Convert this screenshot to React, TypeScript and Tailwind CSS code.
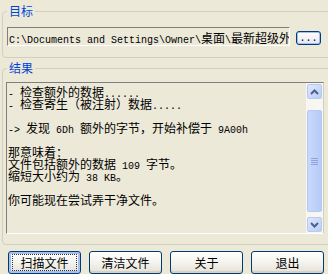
import React from "react";

function Mixed({ text }: { text: string }) {
  const parts = text.match(/[\x00-\x7f]+|[^\x00-\x7f]+/g) || [];
  return (
    <>
      {parts.map((p, i) =>
        /^[\x00-\x7f]/.test(p) ? (
          <span key={i} className="font-['Liberation_Mono',monospace] text-[10px] leading-[12px]">
            {p}
          </span>
        ) : (
          <span key={i} className="font-['Noto_Sans_CJK_SC',sans-serif] text-[12px] leading-[12px]">
            {p}
          </span>
        )
      )}
    </>
  );
}

const lines = [
  "- 检查额外的数据......",
  "- 检查寄生（被注射）数据.....",
  "",
  "-> 发现 6Dh 额外的字节，开始补偿于 9A00h",
  "",
  "那意味着：",
  "文件包括额外的数据 109 字节。",
  "缩短大小约为 38 KB。",
  "",
  "你可能现在尝试弄干净文件。",
];

function XpButton({ label, focused }: { label: string; focused?: boolean }) {
  return (
    <div
      className={
        "w-[73px] h-[23px] shrink-0 rounded-[3px] border border-[#003c74] bg-gradient-to-b from-[#ffffff] via-[#f4f3ee] to-[#e3e1d6] flex items-center justify-center " +
        (focused ? "shadow-[inset_0_0_0_2px_#a7bff0]" : "shadow-[inset_0_-2px_0_#d6d0c5]")
      }
    >
      <div
        className={
          "h-[17px] w-[65px] flex items-center justify-center font-['Noto_Sans_CJK_SC',sans-serif] text-[12px] text-black leading-[17px] " +
          (focused ? "border border-dotted border-[#333]" : "")
        }
      >
        {label}
      </div>
    </div>
  );
}

function Arrow({ up }: { up: boolean }) {
  return (
    <div className="w-[17px] h-[17px] flex items-center justify-center">
      <div className="w-[15px] h-[15px] rounded-[2px] border border-[#b6c9f3] bg-gradient-to-br from-[#dfe8fd] to-[#b9cdf8] flex items-center justify-center">
        <svg width="9" height="6" viewBox="0 0 9 6">
          {up ? (
            <path d="M1 5 L4.5 1.5 L8 5" stroke="#4d6185" strokeWidth="2" fill="none" />
          ) : (
            <path d="M1 1 L4.5 4.5 L8 1" stroke="#4d6185" strokeWidth="2" fill="none" />
          )}
        </svg>
      </div>
    </div>
  );
}

export default function App() {
  return (
    <div className="w-[328px] h-[274px] bg-[#ece9d8] overflow-hidden pt-[11px] pl-[2px]">
      {/* Group 1 */}
      <div className="relative w-[340px] h-[47px] border border-[#d0d0bf] rounded-[4px] pt-[15px] pl-[4px]">
        <div className="absolute left-[4px] top-[-9px] px-[2px] bg-[#ece9d8] text-[#0046d5] font-['Noto_Sans_CJK_SC',sans-serif] text-[12px] leading-[16px]">
          目标
        </div>
        <div className="flex items-center">
          <div className="w-[283px] h-[19px] border border-t-[#7f7f7f] border-l-[#7f7f7f] border-b-[#ffffff] border-r-[#ffffff] bg-[#ece9d8] overflow-hidden whitespace-pre pl-[1px] flex items-center">
            <div className="h-[12px] leading-[12px] whitespace-pre text-black">
              <Mixed text={"C:\\Documents and Settings\\Owner\\桌面\\最新超级外挂"} />
            </div>
          </div>
          <div className="ml-[6px] mt-[2px] w-[25px] h-[14px] rounded-[3px] border border-[#003c74] bg-gradient-to-b from-[#ffffff] to-[#e6e6f0] shadow-[inset_0_0_0_1px_#a7bff0] flex items-end justify-center">
            <span className="font-['Liberation_Mono',monospace] text-[10px] leading-[10px] text-black">...</span>
          </div>
        </div>
      </div>

      {/* Group 2 */}
      <div className="relative mt-[10px] w-[340px] h-[177px] border border-[#d0d0bf] rounded-[4px] pt-[13px] pl-[3px]">
        <div className="absolute left-[4px] top-[-9px] px-[2px] bg-[#ece9d8] text-[#0046d5] font-['Noto_Sans_CJK_SC',sans-serif] text-[12px] leading-[16px]">
          结果
        </div>
        <div className="w-[318px] h-[152px] border border-t-[#7f7f7f] border-l-[#7f7f7f] border-b-[#ffffff] border-r-[#d0d0bf] bg-[#ece9d8] flex">
          <div className="flex-1 pt-[2px] pl-[1px] overflow-hidden text-black">
            {lines.map((l, i) => (
              <div key={i} className="h-[12px] leading-[12px] whitespace-pre">
                <Mixed text={l} />
              </div>
            ))}
          </div>
          <div className="w-[17px] h-full flex flex-col bg-[#f7f6f1]">
            <Arrow up />
            <div className="flex-1 pt-[10px] pb-[4px] flex justify-center">
              <div className="w-[15px] h-[102px] rounded-[2px] border border-[#b6c9f3] bg-gradient-to-r from-[#c9d8fc] to-[#b7cbf8] flex flex-col items-center justify-center gap-[1px]">
                <div className="w-[7px] h-[1px] bg-[#8ca5e0]" />
                <div className="w-[7px] h-[1px] bg-[#8ca5e0]" />
                <div className="w-[7px] h-[1px] bg-[#8ca5e0]" />
                <div className="w-[7px] h-[1px] bg-[#8ca5e0]" />
              </div>
            </div>
            <Arrow up={false} />
          </div>
        </div>
      </div>

      {/* Buttons */}
      <div className="mt-[6px] ml-[6px] flex gap-[8px]">
        <XpButton label="扫描文件" focused />
        <XpButton label="清洁文件" />
        <XpButton label="关于" />
        <XpButton label="退出" />
      </div>
    </div>
  );
}
